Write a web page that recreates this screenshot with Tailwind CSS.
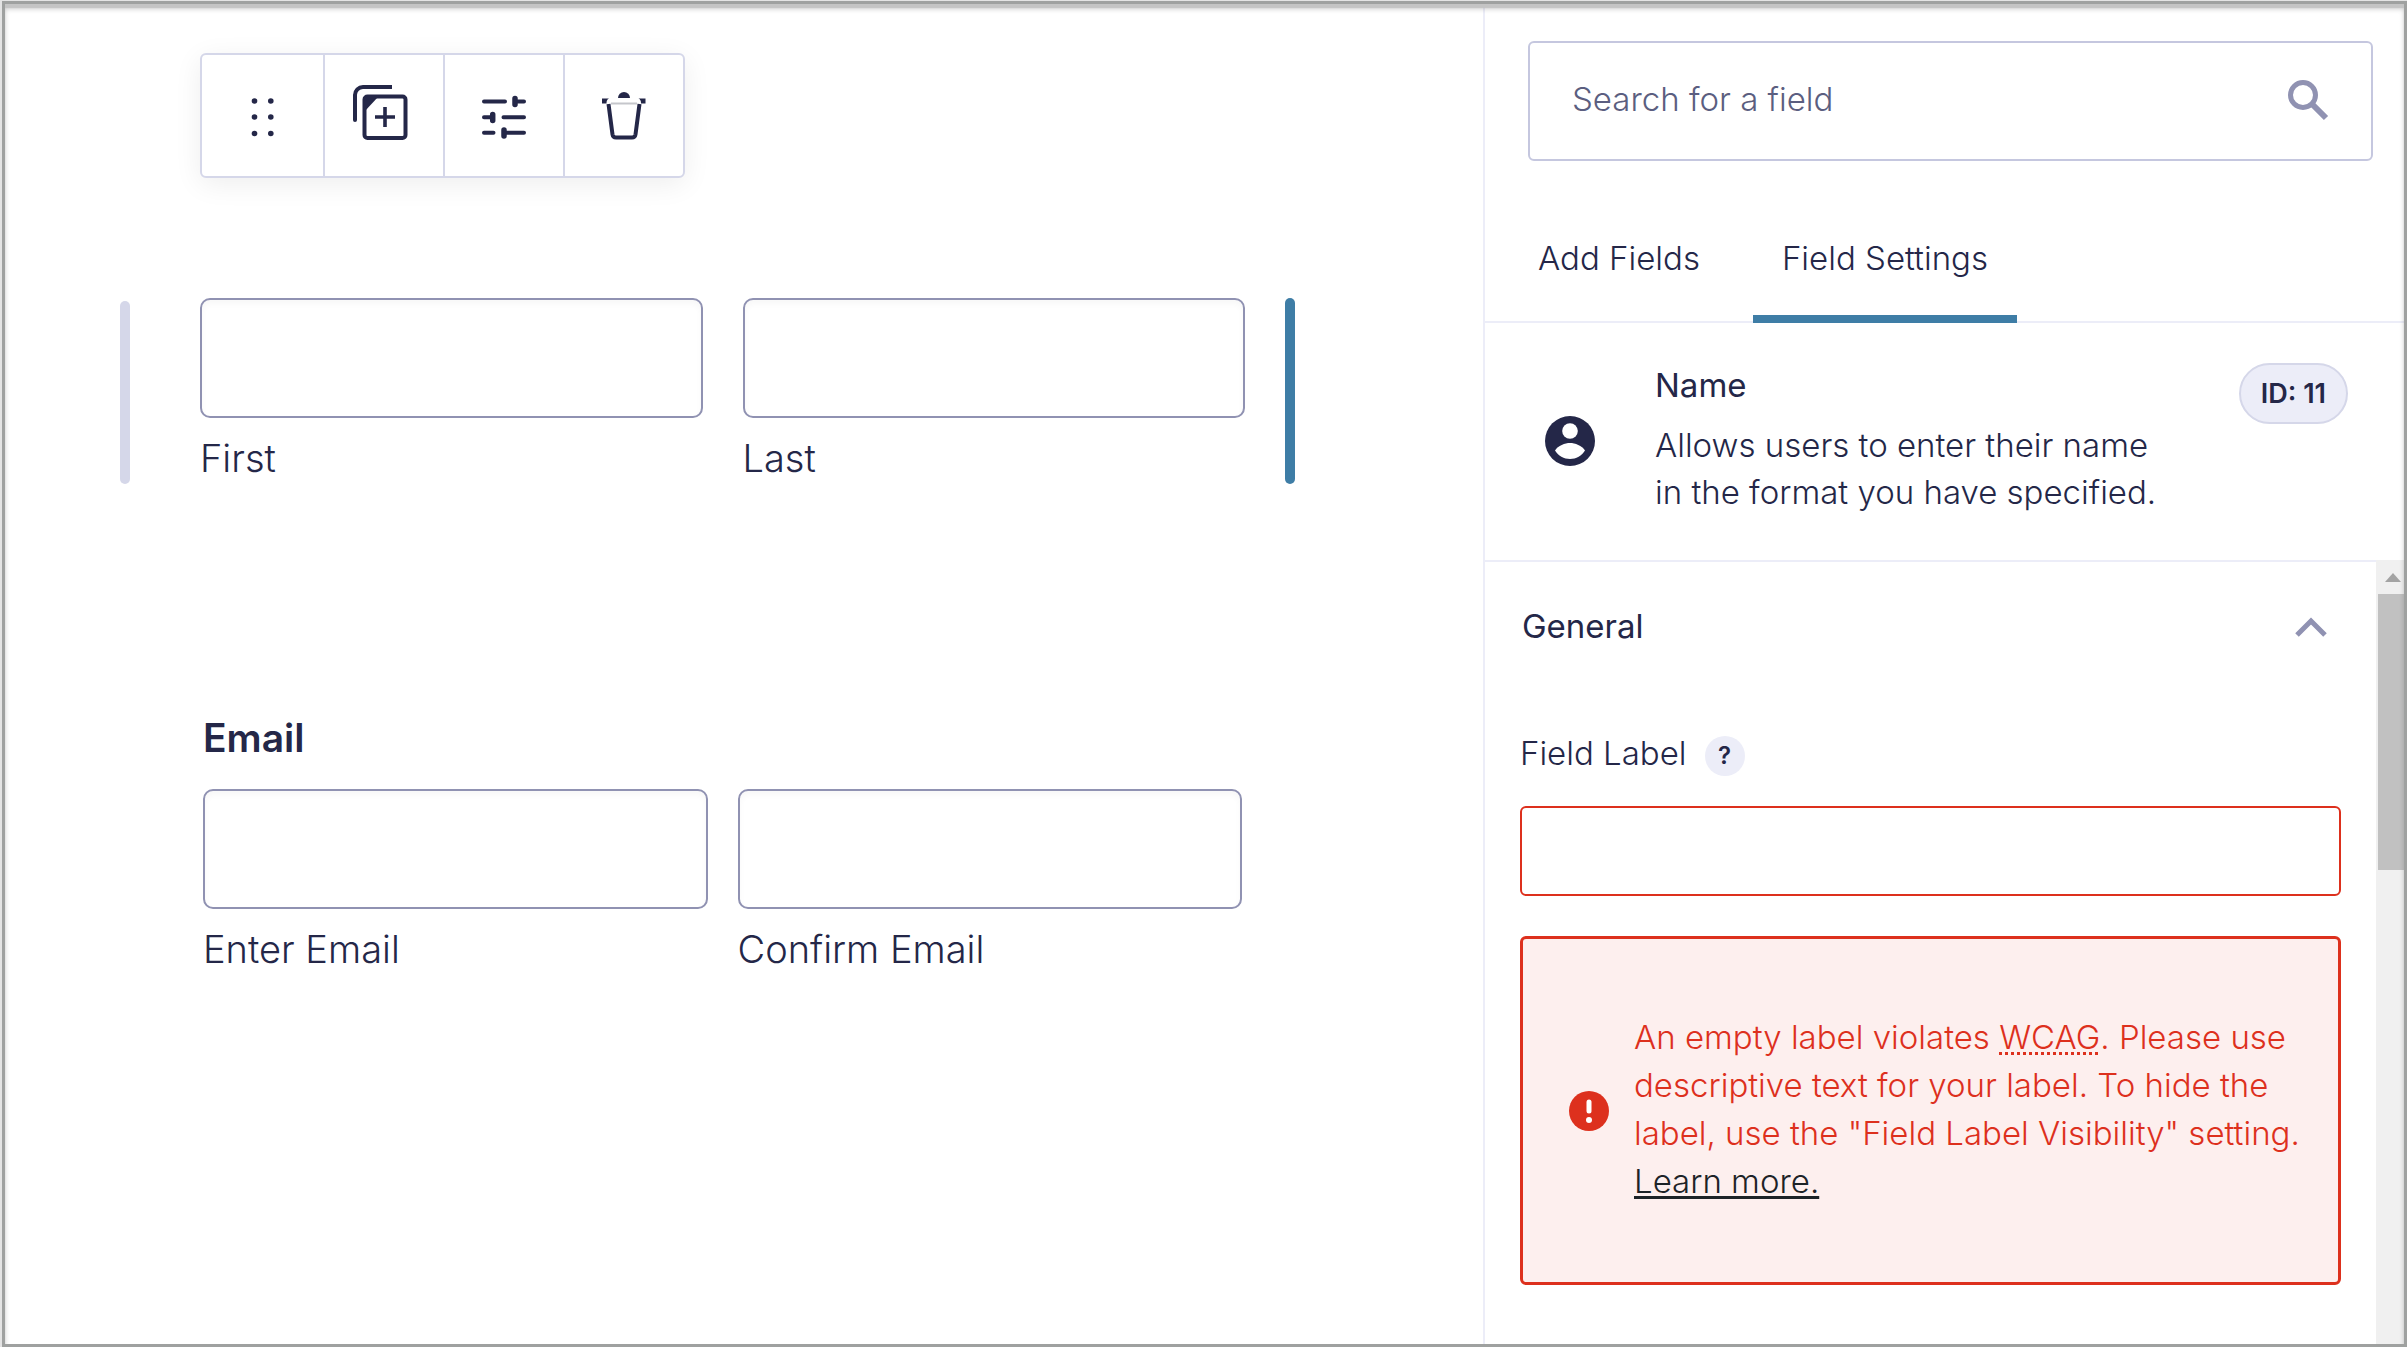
<!DOCTYPE html>
<html lang="en">
<head>
    <meta charset="UTF-8">
    <meta name="viewport" content="width=device-width, initial-scale=1.0">
    <title>Form Editor - Field Settings</title>
    <script src="https://cdn.jsdelivr.net/npm/@tailwindcss/browser@4"></script>
</head>
<body class="bg-white font-['Inter',sans-serif] text-[#242748]">
    <div class="min-h-screen flex flex-col pt-px pl-0.5 bg-[#e4e4e4]">
        <div class="relative grow flex border-3 border-[#9fa1a0] bg-white">

            <!-- Form canvas -->
            <main class="grow pt-[49px] pl-[115px] pr-[188px]">
                <!-- Field toolbar -->
                <div class="ml-20 inline-flex h-[125px] align-top border-2 border-[#d5d7e9] rounded-md bg-white shadow-[0_6px_28px_rgba(0,0,0,0.07)]">
                    <button type="button" aria-label="Move field" class="w-[121px] flex items-center justify-center">
                        <svg class="size-16" viewBox="0 0 64 64" fill="currentColor">
                            <circle cx="23.500" cy="17" r="2.8"/><circle cx="39.800" cy="17" r="2.8"/>
                            <circle cx="23.500" cy="33" r="2.8"/><circle cx="39.800" cy="33" r="2.8"/>
                            <circle cx="23.500" cy="49.500" r="2.8"/><circle cx="39.800" cy="49.500" r="2.8"/>
                        </svg>
                    </button>
                    <button type="button" aria-label="Duplicate field" class="w-[120px] flex items-center justify-center border-l-2 border-[#d5d7e9]">
                        <svg class="size-16" viewBox="0 0 64 64" fill="none" stroke="currentColor" stroke-width="4">
                            <path d="M40 3H11a8 8 0 0 0-8 8v25"/>
                            <circle cx="3" cy="36" r="2" fill="currentColor" stroke="none"/>
                            <rect x="12.500" y="12.500" width="41" height="41.500" rx="3"/>
                            <path d="M13 13h13L13 27z" fill="currentColor" stroke="none"/>
                            <path d="M33 23v20M23 33h20" stroke-width="3.600"/>
                        </svg>
                    </button>
                    <button type="button" aria-label="Field settings" class="w-[120px] flex items-center justify-center border-l-2 border-[#d5d7e9]">
                        <svg class="size-16" viewBox="0 0 64 64" fill="none" stroke="currentColor" stroke-width="4" stroke-linecap="round">
                            <path d="M12 17.500h21M44 17.500h8M12 33.200h8M31.500 33.200h20.500M12 48.700h9.500M34 48.700h18"/>
                            <path d="M43 14.500v6M20.700 30.500v6M32 46v6" stroke-width="5.500"/>
                        </svg>
                    </button>
                    <button type="button" aria-label="Delete field" class="w-[120px] flex items-center justify-center border-l-2 border-[#d5d7e9]">
                        <svg class="size-16" viewBox="0 0 64 64" fill="none" stroke="currentColor">
                            <path d="M26 14a6 6 0 0 1 12 0z" fill="currentColor" stroke="none"/>
                            <path d="M10 14.500h7c-2 1-2.500 2.500-2.500 5H10zM53.500 14.500h-7c2 1 2.500 2.500 2.500 5h4.500z" fill="currentColor" stroke="none"/>
                            <path d="M19 19.500h26" stroke="#c5c6cb" stroke-width="2"/>
                            <path d="M16.500 20l4 30.500q.5 3 3.500 3h16q3 0 3.500-3l4-30.500" stroke-width="4"/>
                        </svg>
                    </button>
                </div>

                <!-- Name field -->
                <div class="mt-[120px] flex text-[38px] leading-[48px] font-light">
                    <div class="mt-[3px] w-2.5 shrink-0 mr-[70px] rounded-full bg-[#d5d7e9]"></div>
                    <div class="grow grid grid-cols-2 gap-10 pb-0.5">
                        <div>
                            <input id="first" type="text" class="block w-full h-[120px] px-6 border-2 border-[#9092b2] rounded-[10px] shadow-[inset_0_4px_6px_rgba(0,0,0,0.03)]">
                            <label for="first" class="block mt-4">First</label>
                        </div>
                        <div>
                            <input id="last" type="text" class="block w-full h-[120px] px-6 border-2 border-[#9092b2] rounded-[10px] shadow-[inset_0_4px_6px_rgba(0,0,0,0.03)]">
                            <label for="last" class="block mt-4">Last</label>
                        </div>
                    </div>
                    <div class="w-2.5 shrink-0 ml-10 rounded-full bg-[#3e7da6]"></div>
                </div>

                <!-- Email field -->
                <fieldset class="mt-[230px] ml-[83px] mr-[53px] text-[38px] leading-[48px] font-light">
                    <legend class="mb-[27px] text-[39px] leading-[48px] font-semibold">Email</legend>
                    <div class="grid grid-cols-2 gap-[30px]">
                        <div>
                            <input id="email" type="email" class="block w-full h-[120px] px-6 border-2 border-[#9092b2] rounded-[10px] shadow-[inset_0_4px_6px_rgba(0,0,0,0.03)]">
                            <label for="email" class="block mt-4">Enter Email</label>
                        </div>
                        <div>
                            <input id="email-confirm" type="email" class="block w-full h-[120px] px-6 border-2 border-[#9092b2] rounded-[10px] shadow-[inset_0_4px_6px_rgba(0,0,0,0.03)]">
                            <label for="email-confirm" class="block mt-4">Confirm Email</label>
                        </div>
                    </div>
                </fieldset>
            </main>

            <!-- Sidebar -->
            <aside class="w-[921px] shrink-0 flex flex-col border-l-2 border-[#ecedf8] text-[33px] leading-[47px] font-light">
                <!-- Search -->
                <div class="mt-[37px] ml-[43px] mr-[31px] h-[120px] flex items-center pl-[42px] pr-10 border-2 border-[#c5c7df] rounded-md">
                    <input type="search" aria-label="Search for a field" placeholder="Search for a field" class="grow pb-1 outline-none placeholder:text-[#5b5e80]">
                    <svg class="size-[46px]" viewBox="0 0 46 46" fill="none" stroke="#9092b2" stroke-width="5">
                        <circle cx="18" cy="17" r="12.500"/>
                        <path d="M27 26l14 14" stroke-width="6"/>
                    </svg>
                </div>

                <!-- Tabs -->
                <div role="tablist" class="pt-[74px] pl-6 flex gap-6 border-b-2 border-[#ecedf8]">
                    <button type="button" role="tab" class="-mb-0.5 px-[29px] pb-[33px] border-b-8 border-transparent">Add Fields</button>
                    <button type="button" role="tab" aria-selected="true" class="-mb-0.5 px-[29px] pb-[33px] border-b-8 border-[#3e7da6]">Field Settings</button>
                </div>

                <!-- Selected field -->
                <div class="flex items-start pt-[39px] pb-11 pl-[60px] pr-14">
                    <svg class="mt-[54px] mr-[60px] size-[50px] shrink-0" viewBox="0 0 50 50">
                        <circle cx="25" cy="25" r="25" fill="#242748"/>
                        <circle cx="25" cy="15" r="7.800" fill="#fff"/>
                        <path d="M10 34.500C13 29.500 20 27 25 27s12 2.500 15 7.500C37 39.500 31 43 25 43s-12-3.500-15-8.500z" fill="#fff"/>
                    </svg>
                    <div class="grow">
                        <h2 class="font-normal">Name</h2>
                        <p class="mt-[13px]">Allows users to enter their name<br>in the format you have specified.</p>
                    </div>
                    <span class="mt-px px-5 h-[61px] flex items-center border-2 border-[#d5d7e9] rounded-full bg-[#ecedf8] text-[27px] font-semibold whitespace-nowrap">ID: 11</span>
                </div>

                <div class="grow flex">
                    <!-- Settings -->
                    <div class="grow border-t-2 border-[#ecedf8] px-[35px] pb-[59px]">
                        <button type="button" aria-expanded="true" class="mt-[41px] w-full flex items-center justify-between pl-0.5 pr-2.5 font-normal">
                            General
                            <svg class="size-10" viewBox="0 0 40 40" fill="none" stroke="#9092b2" stroke-width="5">
                                <path d="M6 28l14-14 14 14"/>
                            </svg>
                        </button>
                        <div class="mt-20 flex items-center gap-[18px]">
                            <label for="field-label">Field Label</label>
                            <button type="button" aria-label="Help" class="mt-1 size-10 rounded-full bg-[#ecedf8] text-[24px] leading-10 font-semibold">?</button>
                        </div>
                        <input id="field-label" type="text" aria-describedby="label-error" class="mt-[29px] block w-full h-[90px] px-5 border-2 border-[#dd301d] rounded-md">
                        <div id="label-error" role="alert" class="mt-10 flex items-center gap-[25px] h-[349px] pl-[46px] border-3 border-[#dd301d] rounded-md bg-[#fdefee] text-[#dd301d] leading-[48px]">
                            <svg class="size-10 shrink-0" viewBox="0 0 40 40">
                                <circle cx="20" cy="20" r="20" fill="#dd301d"/>
                                <path d="M20 11v9" stroke="#fff" stroke-width="5" stroke-linecap="round"/>
                                <circle cx="20" cy="29" r="3" fill="#fff"/>
                            </svg>
                            <p class="pb-1">An empty label violates <abbr class="underline decoration-dotted decoration-3 underline-offset-3">WCAG</abbr>. Please use<br>descriptive text for your label. To hide the<br>label, use the "Field Label Visibility" setting.<br><a href="#" class="text-[#1d2327] underline decoration-3 underline-offset-3">Learn more.</a></p>
                        </div>
                    </div>

                    <!-- Scrollbar -->
                    <div class="w-7 shrink-0 bg-[#f0f0f0] pl-0.5" aria-hidden="true">
                        <svg class="w-full h-[34px]" viewBox="0 0 26 34" fill="#a3a3a3">
                            <path d="M15 13l8 9H7z"/>
                        </svg>
                        <div class="h-[276px] bg-[#c1c1c1]"></div>
                    </div>
                </div>
            </aside>

            <!-- Frame inner shade -->
            <div class="absolute inset-0 pointer-events-none shadow-[inset_0_4px_1px_#c4c4c4,inset_0_5px_5px_rgba(0,0,0,0.2)]"></div>
        </div>
    </div>
</body>
</html>
